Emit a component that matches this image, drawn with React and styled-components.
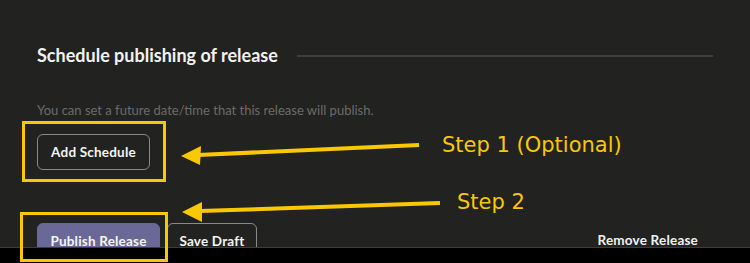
import React from 'react';
import styled, { createGlobalStyle } from 'styled-components';

const GlobalStyle = createGlobalStyle`
  html, body {
    margin: 0;
    padding: 0;
    background: #000;
  }
  body {
    font-family: Lato, "Open Sans", sans-serif;
  }
`;

const Page = styled.div`
  position: relative;
  width: 750px;
  height: 263px;
  overflow: hidden;
  display: flex;
  flex-direction: column;
`;

const Panel = styled.div`
  height: 248px;
  box-sizing: border-box;
  background: #222220;
  border-bottom: 1px solid #3d3d3b;
  padding: 43px 37px 0 37px;
  overflow: hidden;
  display: flex;
  flex-direction: column;
`;

const Footer = styled.div`
  flex: 1;
  background: #000;
`;

const SectionHeader = styled.div`
  display: flex;
  align-items: center;
  gap: 19px;
`;

const Title = styled.h2`
  margin: 0;
  font-size: 18px;
  line-height: 24px;
  font-weight: 700;
  color: #f2f2f2;
  white-space: nowrap;
`;

const Rule = styled.div`
  flex: 1;
  height: 2px;
  background: #3e3e3c;
  margin-top: 2px;
`;

const Hint = styled.p`
  margin: 35px 0 0 0;
  font-size: 13px;
  line-height: 16px;
  color: #6c6c6a;
`;

const Button = styled.button`
  font-family: Lato, "Open Sans", sans-serif;
  font-size: 13.5px;
  line-height: 16px;
  font-weight: 700;
  letter-spacing: 0.2px;
  color: #f4f4f4;
  background: ${(p) => (p.$primary ? '#6a6896' : 'transparent')};
  border: 1px solid ${(p) => (p.$primary ? '#6a6896' : '#8a8a88')};
  border-radius: 6px;
  box-sizing: border-box;
  width: ${(p) => p.$w}px;
  padding: ${(p) => (p.$cut ? '9px 0 16px' : '9px 0')};
  cursor: pointer;
`;

const ScheduleRow = styled.div`
  margin-top: 16px;
  display: flex;
`;

const Divider = styled.div`
  margin-top: 32px;
  height: 2px;
  background: #2e2e2c;
`;

const ActionRow = styled.div`
  margin-top: 21px;
  display: flex;
  align-items: flex-start;
  gap: 7px;
`;

const LinkButton = styled.button`
  margin-left: auto;
  margin-right: 15px;
  margin-top: 9px;
  background: none;
  border: none;
  padding: 0;
  font-family: Lato, "Open Sans", sans-serif;
  font-size: 13.5px;
  line-height: 16px;
  font-weight: 700;
  letter-spacing: 0.2px;
  color: #f0f0f0;
  cursor: pointer;
`;

const Highlight = styled.div`
  position: absolute;
  box-sizing: border-box;
  border: 3px solid #f9c800;
  left: ${(p) => p.$x}px;
  top: ${(p) => p.$y}px;
  width: ${(p) => p.$w}px;
  height: ${(p) => p.$h}px;
  pointer-events: none;
`;

const StepLabel = styled.div`
  position: absolute;
  left: ${(p) => p.$x}px;
  top: ${(p) => p.$y}px;
  font-family: "Comic Sans MS", "DejaVu Sans", sans-serif;
  font-size: 21px;
  color: #f9c800;
  white-space: nowrap;
  pointer-events: none;
`;

const Arrows = styled.svg`
  position: absolute;
  left: 0;
  top: 0;
  pointer-events: none;
`;

export default function App() {
  return (
    <Page>
      <GlobalStyle />
      <Panel>
        <SectionHeader>
          <Title>Schedule publishing of release</Title>
          <Rule />
        </SectionHeader>
        <Hint>You can set a future date/time that this release will publish.</Hint>
        <ScheduleRow>
          <Button $w={113}>Add Schedule</Button>
        </ScheduleRow>
        <Divider />
        <ActionRow>
          <Button $primary $cut $w={123}>Publish Release</Button>
          <Button $cut $w={90}>Save Draft</Button>
          <LinkButton>Remove Release</LinkButton>
        </ActionRow>
      </Panel>
      <Footer />

      <Highlight $x={22} $y={121} $w={144} $h={61} />
      <Highlight $x={20} $y={212} $w={148} $h={50} />

      <Arrows width="750" height="263" viewBox="0 0 750 263">
        <line x1="198" y1="155" x2="419" y2="145" stroke="#f9c800" strokeWidth="4" />
        <polygon points="181,156 201,146 200,165" fill="#f9c800" />
        <line x1="200" y1="211" x2="440" y2="203" stroke="#f9c800" strokeWidth="4" />
        <polygon points="182,212 202,202 202,222" fill="#f9c800" />
      </Arrows>

      <StepLabel $x={442} $y={133}>Step 1 (Optional)</StepLabel>
      <StepLabel $x={457} $y={190}>Step 2</StepLabel>
    </Page>
  );
}
